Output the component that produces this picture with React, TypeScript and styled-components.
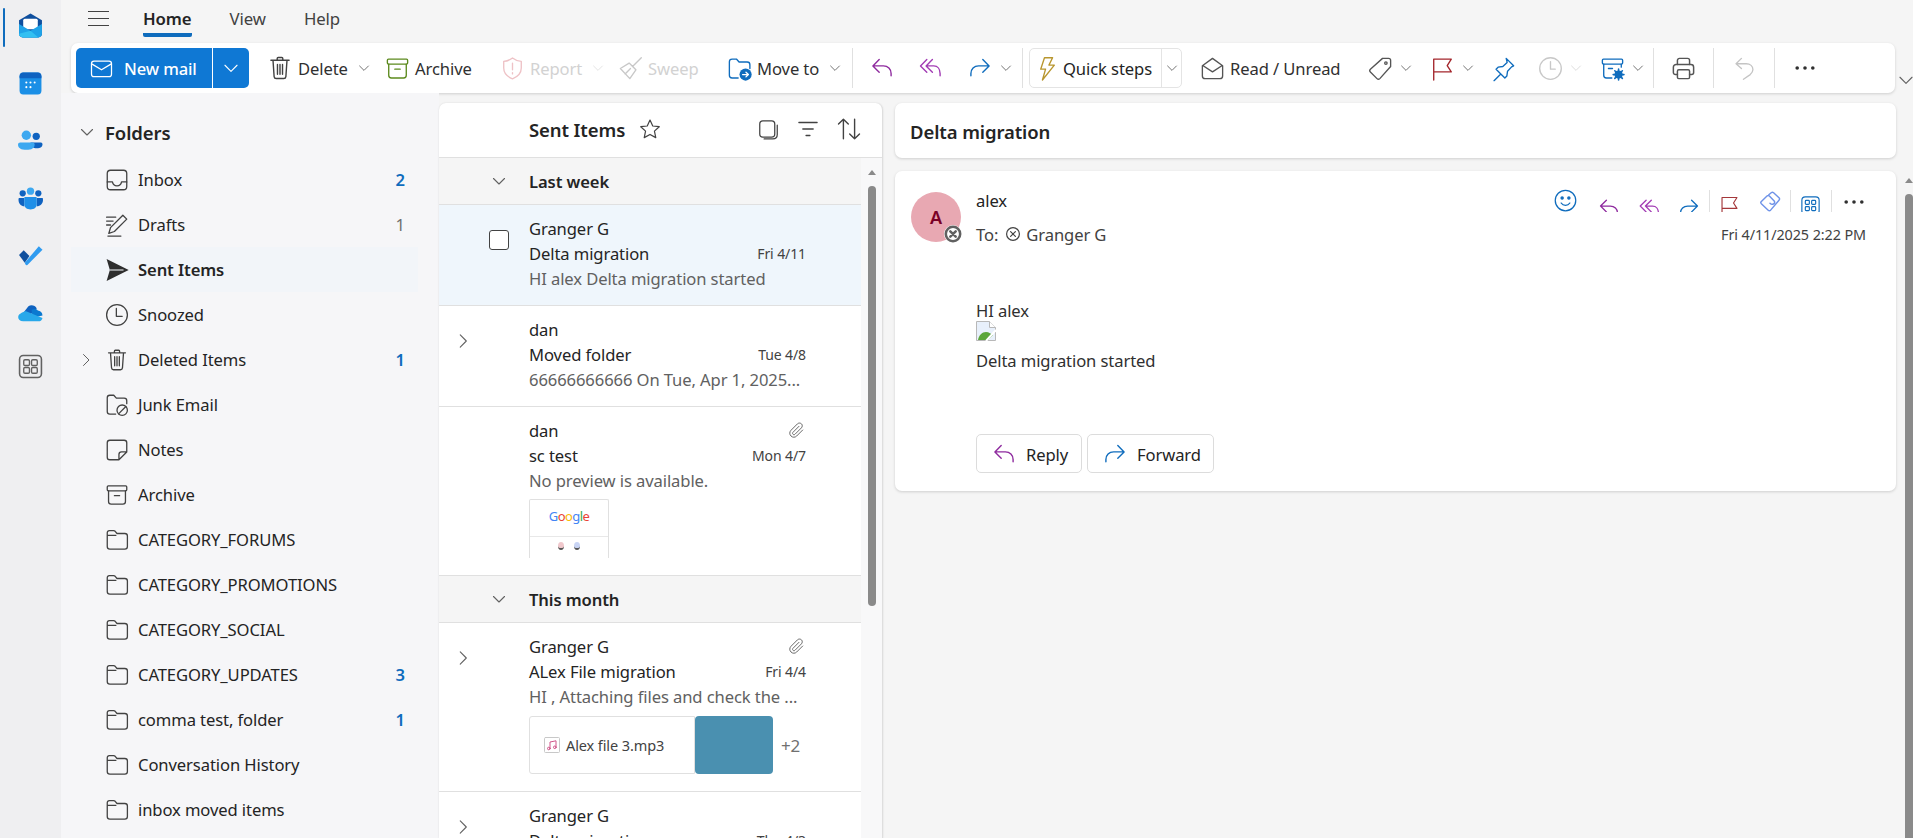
import React, { FC, ReactNode } from 'react';
import styled, { createGlobalStyle } from 'styled-components';

const Global = createGlobalStyle`
  html, body { margin: 0; padding: 0; height: 100%; overflow: hidden; }
  body {
    background: #f5f5f5;
    color: #242424;
    font-family: "Noto Sans", "Open Sans", sans-serif;
    font-size: 16.6px;
    letter-spacing: -0.1px;
  }
  * { box-sizing: border-box; }
`;

const paths: Record<string, ReactNode> = {
  mail: <><rect x="2" y="4" width="16" height="12.5" rx="2" /><path d="M2.5 6.5 10 11l7.5-4.5" /></>,
  trash: <path d="M3.5 4.5h13M8 4.5V3.2c0-.4.3-.7.7-.7h2.6c.4 0 .7.3.7.7v1.3M5 4.5l.8 11.6c.1.8.7 1.4 1.5 1.4h5.4c.8 0 1.4-.6 1.5-1.4L15 4.5M8.2 7.5v7M10 7.5v7M11.8 7.5v7" />,
  archive: <><rect x="2.5" y="3" width="15" height="3.8" rx=".8" /><path d="M3.5 6.8V15c0 1.1.9 2 2 2h9c1.1 0 2-.9 2-2V6.800M8 10.500h4" /></>,
  shield: <><path d="M10 2.200c2 1.600 4.200 2.400 6.500 2.500v5c0 3.600-2.300 6.300-6.500 8-4.200-1.700-6.500-4.400-6.500-8v-5c2.300-.1 4.500-.9 6.500-2.500z" /><path d="M10 6v5M10 13v1" /></>,
  broom: <path d="M18 2 11.500 8.500M9 6l5 5-4.500 6.500-7-7.500zM6 14l4-4" />,
  moveFolder: <><path d="M2.500 15V5c0-1.100.9-2 2-2h3.200l2 2.200h6c1.100 0 2 .9 2 2V10M2.500 15c0 1.100.9 2 2 2h4.500" /><circle cx="14.500" cy="14.500" r="4.500" fill="#0f6cbd" stroke="none" /><path d="M12.300 14.500h4.200M14.800 12.800l1.800 1.700-1.800 1.700" stroke="#fff" /></>,
  reply: <path d="M8 4 3.500 8.500 8 13M3.500 8.500H11c3.200 0 5.500 2.300 5.500 5.500v1.500" />,
  replyAll: <path d="M7 4 2.500 8.500 7 13M11 4 6.500 8.500 11 13M6.500 8.500H12c2.800 0 4.500 2.300 4.500 5.500v1.500" />,
  forward: <path d="M12 4l4.500 4.500L12 13M16.500 8.500H9c-3.200 0-5.500 2.300-5.500 5.500v1.500" />,
  bolt: <path d="M8.500 2h6l-2.700 5.500h4L7 18.500l2.300-8H5.700z" />,
  readMail: <path d="M2.500 8v7.500c0 1.100.9 2 2 2h11c1.100 0 2-.9 2-2V8L10 2.500zM2.800 7.800 10 12.500l7.200-4.700" />,
  tag: <><path d="M11.500 2.500h4.500c.8 0 1.500.7 1.500 1.500v4.500L9.500 17.500c-.6.600-1.500.600-2.100 0l-4.900-4.900c-.6-.6-.6-1.500 0-2.100z" /><circle cx="14" cy="6" r=".9" /></>,
  flag: <path d="M3.500 18.500V3h13l-3 4.800 3 4.700h-13" />,
  pin: <path d="M12 2.500l5.500 5.500-1.500.8-3 3.200-.5 3.500-1.500 1.500-3-3-5 5 5-5-3.500-3.500 1.500-1.500 3.500-.5 3.200-3z" />,
  clock: <><circle cx="10" cy="10" r="8" /><path d="M10 5v5.500h3.500" /></>,
  rules: <><rect x="2.500" y="3" width="15" height="3.800" rx=".8" /><path d="M3.500 6.800V15c0 1.100.9 2 2 2h4M16.500 6.800V9M7 10h3" /><circle cx="14.500" cy="14.500" r="3" fill="#0f6cbd" stroke="none" /><circle cx="14.500" cy="14.500" r="1" fill="#fff" stroke="none" /><path d="M14.500 10.500v8M10.500 14.500h8M11.700 11.700l5.600 5.600M17.300 11.700l-5.600 5.600" strokeWidth="1.200" /></>,
  print: <><path d="M5.500 7V4c0-.8.7-1.500 1.500-1.500h6c.8 0 1.500.7 1.500 1.500v3" /><path d="M5.500 14.500H4c-.8 0-1.500-.7-1.500-1.500V9c0-1.100.9-2 2-2h11c1.100 0 2 .9 2 2v4c0 .8-.7 1.500-1.500 1.500h-1.500" /><rect x="5.500" y="11" width="9" height="6.500" rx="1" /></>,
  undo: <path d="M7 2.500 3 6.500l4 3.500M3 6.500h7.500c3 0 5 1.800 5 4.300 0 1.500-.8 2.700-2 3.700L8.500 18" />,
  chevDown: <path d="M4.500 7.500 10 13l5.500-5.500" />,
  chevRight: <path d="M7.500 4.500 13 10l-5.500 5.500" />,
  inbox: <><rect x="2.500" y="2.500" width="15" height="15" rx="2.500" /><path d="M2.500 11.500h4c.3 1.700 1.700 3 3.500 3s3.200-1.300 3.500-3h4" /></>,
  drafts: <path d="M2 4h7M2 7h5M2 10h3M14.500 2.500l3 3-9.500 9.500-4.300 1.500 1.300-4.500zM3 18.500h10" />,
  snooze: <><circle cx="10" cy="10" r="8" /><path d="M9.500 5v6H14" /></>,
  junk: <><path d="M9 17H4.500c-1.100 0-2-.9-2-2V4.500c0-1.100.9-2 2-2h3l2 2.200h6c1.100 0 2 .9 2 2V9" /><circle cx="14" cy="14" r="4" /><path d="M11.200 16.800l5.600-5.600" /></>,
  note: <path d="M4.500 2.500h11c1.100 0 2 .9 2 2v7l-6 6h-7c-1.100 0-2-.9-2-2v-11c0-1.100.9-2 2-2zM17.500 11.500h-4c-1.100 0-2 .9-2 2v4" />,
  folder: <path d="M2.500 15V4.500c0-1.100.6-1.700 1.600-1.700h3.300c.5 0 .9.200 1.200.500l1.400 1.700h6c1.100 0 2 .9 2 2V15c0 1.100-.9 2-2 2h-11.500c-1.100 0-2-.9-2-2zM2.500 6.500h6.600" />,
  star: <path d="M10 2.500l2.300 5 5.400.6-4 3.700 1.100 5.400L10 14.500l-4.800 2.700 1.100-5.400-4-3.700 5.400-.6z" />,
  stack: <><rect x="3" y="3" width="12" height="13" rx="2.500" /><path d="M17 6.500V14c0 2-1.300 3.500-3.500 3.500H6.500" /></>,
  filter: <path d="M3 5h14M6 10h8M8.500 15h3" />,
  sort: <path d="M6 17V3M2.500 6.500 6 3l3.500 3.500M14 3v14M10.500 13.500 14 17l3.500-3.500" />,
  clip: <path d="M16.500 9.500l-6.300 6.300c-1.700 1.700-4.300 1.700-6 0s-1.700-4.300 0-6l6.800-6.800c1.100-1.100 3-1.100 4.200 0s1.100 3 0 4.200l-6.800 6.800c-.6.600-1.500.600-2.100 0s-.6-1.500 0-2.100l6.300-6.300" />,
  smile: <><circle cx="10" cy="10" r="8.200" /><path d="M6.500 12c.8 1.200 2 1.900 3.500 1.900s2.700-.7 3.500-1.900" /><circle cx="7.300" cy="8" r=".9" fill="currentColor" /><circle cx="12.700" cy="8" r=".9" fill="currentColor" /></>,
  loop: <path d="M9 4 11 2.300Q12 1.500 13 2.300L17.500 6.500Q18.500 7.500 17.500 8.500L10.500 16.800Q9.500 17.800 8.500 16.800L2.800 11.500Q1.800 10.500 2.800 9.500L7.500 5Q8.500 4 9.500 5L13.500 9.200Q14.500 10.500 13 11.500 11.500 12.500 10 11" />,
  apps: <><rect x="2.500" y="2.500" width="15" height="15" rx="3" /><rect x="5.500" y="5.500" width="3.500" height="3.500" rx=".8" /><rect x="11" y="5.500" width="3.500" height="3.500" rx=".8" /><rect x="5.500" y="11" width="3.500" height="3.500" rx=".8" /><rect x="11" y="11" width="3.500" height="3.500" rx=".8" /></>,
  dismissCircle: <><circle cx="10" cy="10" r="8" /><path d="M7 7l6 6M13 7l-6 6" /></>,
  music: <><rect x="2.500" y="2.500" width="15" height="15" rx="1" stroke="#c8c8c8" /><path d="M8 13.500V7l6-1.200v6.500" /><circle cx="6.800" cy="13.500" r="1.300" /><circle cx="12.800" cy="12.300" r="1.300" /></>,
  more: <g fill="currentColor" stroke="none"><circle cx="3.500" cy="10" r="1.500" /><circle cx="10" cy="10" r="1.500" /><circle cx="16.500" cy="10" r="1.500" /></g>,
};

const Svg = styled.svg<{ $color?: string }>`
  display: block;
  flex: none;
  fill: none;
  stroke: currentColor;
  stroke-linecap: round;
  stroke-linejoin: round;
  color: ${p => p.$color || '#424242'};
`;

const Icon: FC<{ name: string; size?: number; color?: string; width?: number }> = ({ name, size = 27, color, width = 1 }) => (
  <Svg $color={color} width={size} height={size} viewBox="0 0 20 20" strokeWidth={width}>
    {paths[name]}
  </Svg>
);

/* app rail */

const Page = styled.div`
  display: flex;
  width: 100%;
  height: 100vh;
  overflow: hidden;
`;

const Rail = styled.nav`
  flex: 0 0 61px;
  display: flex;
  flex-direction: column;
  align-items: center;
  padding-top: 13px;
  background: #efeff1;
  position: relative;
`;

const RailSlot = styled.div<{ $h: number }>`
  height: ${p => p.$h}px;
  width: 100%;
  display: flex;
  justify-content: center;
`;

const RailMark = styled.div`
  position: absolute;
  left: 3px;
  top: 8px;
  width: 2px;
  height: 39px;
  background: #0f6cbd;
  border-radius: 1px;
`;

const RailGlyph = styled.svg`
  display: block;
  width: 25px;
  height: 25px;
`;

const railIcons: { h: number; glyph: ReactNode }[] = [
  { h: 58, glyph: <><path d="M12 .5 1 7v13c0 2 1.500 3.500 3.500 3.500h15c2 0 3.500-1.500 3.500-3.500V7z" fill="#0f4f9e" /><rect x="5" y="5.500" width="14" height="10" rx="1.500" fill="#fff" /><path d="M1 10.500 12 17l11-6.500V20c0 2-1.500 3.500-3.500 3.500h-15C2.500 23.500 1 22 1 20z" fill="#1fa3e8" /><path d="M1 20c0 2 1.500 3.500 3.500 3.500h15L12 17z" fill="#32c0f2" /></> },
  { h: 58, glyph: <><rect x="1.500" y="1.500" width="21" height="21" rx="3.500" fill="#1b8fe6" /><path d="M1.500 7V5c0-2 1.500-3.500 3.500-3.500h14c2 0 3.500 1.500 3.500 3.500v2z" fill="#0f62c0" /><g fill="#fff"><circle cx="8" cy="11" r="1" /><circle cx="12" cy="11" r="1" /><circle cx="16" cy="11" r="1" /><circle cx="8" cy="15.500" r="1" /><circle cx="12" cy="15.500" r="1" /></g></> },
  { h: 57, glyph: <><circle cx="17.500" cy="7" r="3.500" fill="#0f62c0" /><path d="M12 13h10c1 0 1.500.8 1.500 1.800 0 2-2 3.700-5.500 3.700s-6-1.700-6-5.500z" fill="#0f62c0" /><circle cx="8" cy="6" r="4.500" fill="#3da8f0" /><path d="M2 13h12c1.200 0 2 .8 2 2 0 3-3 5-8 5s-8-2-8-5c0-1.200 1-2 2-2z" fill="#3da8f0" /></> },
  { h: 56, glyph: <><circle cx="4.500" cy="7" r="3" fill="#0f62c0" /><circle cx="19.500" cy="7" r="3" fill="#0f62c0" /><circle cx="12" cy="5" r="3.500" fill="#3da8f0" /><path d="M1 11.500h5v8c-3 0-5.500-2.500-5.500-6 0-1 0-2 .5-2zM18 11.500h5.500c.5 0 .5 1 .5 2 0 3.500-2.500 6-6 6z" fill="#0f62c0" /><path d="M7 10.500h10c.6 0 1 .4 1 1v6c0 3-2.500 5-6 5s-6-2-6-5v-6c0-.6.4-1 1-1z" fill="#1f8fe8" /></> },
  { h: 59, glyph: <><path d="M1 12.500 5.500 8l5.500 5.500L6.500 20z" fill="#0f4f9e" /><path d="M6.500 20 20 4l3.500 3.500L9 22c-.8.700-1.500.700-2.500-2z" fill="#2f9bf0" /></> },
  { h: 53, glyph: <><path d="M10 5c2.800-1.800 6.500-.8 8 2.200L9 16H1.500z" fill="#0f62c0" /><path d="M13 8.500c2.500-1.300 5.300-1.200 6 .7 2.500.2 4.500 2.200 4.500 4.800L14 16z" fill="#0b79d0" /><path d="M5 10.500c1.500-.8 3-.8 4.500 0l14 5.700c-.3 1.800-1.800 3.300-4 3.300H5c-4 0-5.500-3-4.500-5.500C1 12.500 3 11.500 5 10.500z" fill="#28a8ea" /></> },
  { h: 30, glyph: <><rect x="1.500" y="1.500" width="21" height="21" rx="3.500" fill="none" stroke="#616161" strokeWidth="1.500" /><g fill="none" stroke="#616161" strokeWidth="1.300"><rect x="5.500" y="5.500" width="5.500" height="5.500" rx="1.200" /><rect x="13" y="5.500" width="5.500" height="5.500" rx="1.200" /><rect x="5.500" y="13" width="5.500" height="5.500" rx="1.200" /><rect x="13" y="13" width="5.500" height="5.500" rx="1.200" /></g></> },
];

/* tabs and ribbon */

const Main = styled.div`
  flex: 1;
  min-width: 0;
  display: flex;
  flex-direction: column;
`;

const TabBar = styled.div`
  flex: 0 0 43px;
  display: flex;
  align-items: flex-start;
  padding-left: 27px;
`;

const Burger = styled.div`
  width: 21px;
  height: 15px;
  margin: 11px 34px 0 0;
  border-top: 1.500px solid #424242;
  border-bottom: 1.500px solid #424242;
  position: relative;

  &:after {
    content: "";
    position: absolute;
    left: 0;
    right: 0;
    top: 5.500px;
    height: 1.500px;
    background: #424242;
  }
`;

const Tab = styled.div<{ $active?: boolean }>`
  height: 37px;
  margin-right: 38px;
  padding-top: 7px;
  line-height: 24px;
  font-size: 16.800px;
  font-weight: ${p => (p.$active ? 600 : 400)};
  color: ${p => (p.$active ? '#242424' : '#424242')};
  border-bottom: ${p => (p.$active ? '4px solid #0f6cbd' : '0')};
  border-radius: 0 0 2px 2px;
`;

const RibbonRow = styled.div`
  flex: 0 0 50px;
  display: flex;
  padding-left: 10px;
`;

const Ribbon = styled.div`
  flex: 0 0 1824px;
  display: flex;
  align-items: center;
  padding-left: 5px;
  background: #fff;
  border-radius: 7px;
  box-shadow: 0 1px 3px rgba(0, 0, 0, 0.16);
`;

const Collapse = styled.div`
  align-self: flex-end;
  margin-bottom: 2px;
`;

const NewMail = styled.div`
  flex: 0 0 173px;
  height: 40px;
  margin-right: 20px;
  display: flex;
  background: #0f78d4;
  color: #fff;
  border-radius: 5px;
  font-weight: 500;
  font-size: 16.500px;
`;

const NewMailMain = styled.div`
  flex: 0 0 137px;
  display: flex;
  align-items: center;
  gap: 10px;
  padding-left: 13px;
  border-right: 1px solid #fff;
`;

const NewMailDrop = styled.div`
  flex: 1;
  display: flex;
  align-items: center;
  justify-content: center;
`;

const Tool = styled.div<{ $w: number; $off?: boolean }>`
  flex: 0 0 ${p => p.$w}px;
  display: flex;
  align-items: center;
  gap: 4px;
  color: ${p => (p.$off ? '#d2d2d2' : '#303030')};
  white-space: nowrap;

  > svg:first-child {
    margin-left: -3px;
  }
`;

const ToolDrop = styled.span`
  margin-left: 4px;
`;

const Sep = styled.div<{ $mr?: number }>`
  flex: none;
  width: 1px;
  height: 40px;
  background: #e0e0e0;
  margin-right: ${p => p.$mr || 0}px;
`;

const QuickSteps = styled.div`
  flex: 0 0 153px;
  height: 40px;
  margin-right: 20px;
  display: flex;
  border: 1px solid #e4e4e4;
  border-radius: 5px;
  color: #242424;
`;

const QuickMain = styled.div`
  flex: 0 0 132px;
  display: flex;
  align-items: center;
  gap: 3px;
  padding-left: 3px;
  border-right: 1px solid #e4e4e4;
  white-space: nowrap;
`;

const QuickDrop = styled.div`
  flex: 1;
  display: flex;
  align-items: center;
  justify-content: center;
`;

/* folders */

const Content = styled.div`
  flex: 1;
  min-height: 0;
  display: flex;
  margin-top: 10px;
`;

const FolderPane = styled.aside`
  flex: 0 0 378px;
  padding: 10px 21px 0 10px;
  background: #f6f6f8;
  margin-top: -10px;
`;

const FolderHead = styled.div`
  height: 54px;
  padding: 4px 0 0 6px;
  display: flex;
  align-items: center;
  gap: 8px;
  font-size: 18.500px;
  font-weight: 600;
`;

const FolderRow = styled.div<{ $on?: boolean }>`
  height: 45px;
  display: grid;
  grid-template-columns: 36px 31px 1fr auto;
  align-items: center;
  padding-right: 13px;
  background: ${p => (p.$on ? '#f2f5f9' : 'transparent')};
  font-weight: ${p => (p.$on ? 600 : 400)};
  white-space: nowrap;
`;

const Twisty = styled.div`
  padding-left: 5px;
`;

const FolderGlyph = styled.div`
  margin-left: -3px;
`;

const Count = styled.span<{ $muted?: boolean }>`
  color: ${p => (p.$muted ? '#707070' : '#0f6cbd')};
  font-weight: ${p => (p.$muted ? 400 : 600)};
`;

/* message list */

const ListPane = styled.section`
  flex: 0 0 444px;
  display: flex;
  flex-direction: column;
  background: #fff;
  border-radius: 7px 7px 0 0;
  border-right: 1px solid #dedede;
  box-shadow: 0 0 2px rgba(0, 0, 0, 0.12);
`;

const ListHead = styled.header`
  flex: 0 0 55px;
  display: flex;
  align-items: center;
  padding: 0 19px 2px 90px;
  border-bottom: 1px solid #e0e0e0;
`;

const ListTitle = styled.div`
  font-size: 18.500px;
  font-weight: 600;
  margin-right: 13px;
`;

const ListTools = styled.div`
  margin-left: auto;
  display: flex;
  align-items: center;
  gap: 14px;
`;

const ListWrap = styled.div`
  flex: 1;
  min-height: 0;
  display: flex;
`;

const ListBody = styled.div`
  flex: 0 0 422px;
  overflow: hidden;
`;

const Group = styled.div`
  height: 47px;
  display: grid;
  grid-template-columns: 90px 1fr;
  align-items: center;
  background: #f5f5f5;
  border-bottom: 1px solid #e0e0e0;
  font-weight: 600;
`;

const GroupChev = styled.div`
  padding-left: 50px;
`;

const Mail = styled.article<{ $on?: boolean }>`
  display: grid;
  grid-template-columns: 90px 1fr;
  padding: 11px 55px 0 0;
  background: ${p => (p.$on ? '#eff6fc' : '#fff')};
  border-bottom: 1px solid #e0e0e0;
`;

const MailLead = styled.div<{ $check?: boolean }>`
  padding: ${p => (p.$check ? '14px 0 0 50px' : '13px 0 0 13px')};
`;

const Checkbox = styled.div`
  width: 20px;
  height: 20px;
  border: 1px solid #424242;
  border-radius: 3px;
  background: #fff;
`;

const MailLine = styled.div`
  height: 25px;
  line-height: 25px;
  display: flex;
  align-items: center;
  justify-content: space-between;
  white-space: nowrap;
`;

const Preview = styled(MailLine)`
  color: #616161;
`;

const MailDate = styled.span`
  font-size: 14px;
  color: #424242;
`;

const MailSpace = styled.div<{ $h: number }>`
  height: ${p => p.$h}px;
`;

const Thumb = styled.div`
  width: 80px;
  height: 59px;
  margin-top: 6px;
  border: 1px solid #e0e0e0;
  border-bottom: 0;
  border-radius: 2px 2px 0 0;
  display: flex;
  flex-direction: column;
  align-items: center;
`;

const ThumbLogo = styled.div`
  height: 37px;
  width: 100%;
  padding-top: 8px;
  text-align: center;
  font-size: 13px;
  line-height: 17px;
  letter-spacing: -0.600px;
  border-bottom: 1px solid #e8e8e8;
`;

const GL = styled.span<{ $c: string }>`
  color: ${p => p.$c};
`;

const ThumbBits = styled.div`
  display: flex;
  gap: 10px;
  padding-top: 5px;
`;

const ThumbDot = styled.div<{ $c: string }>`
  width: 6px;
  height: 8px;
  border-radius: 50%;
  background: ${p => p.$c};
  border-bottom: 2px solid #555;
`;

const Attachments = styled.div`
  display: flex;
  align-items: center;
  height: 58px;
  margin: 7px 0 17px;
`;

const AttachCard = styled.div`
  flex: 0 0 166px;
  height: 100%;
  display: flex;
  align-items: center;
  gap: 4px;
  padding-left: 12px;
  border: 1px solid #e0e0e0;
  border-radius: 3px 0 0 3px;
  font-size: 14.500px;
  color: #424242;
  white-space: nowrap;
`;

const AttachTile = styled.div`
  flex: 0 0 78px;
  height: 100%;
  background: #4a90b0;
  border-radius: 4px;
`;

const AttachMore = styled.span`
  margin-left: 8px;
  font-size: 17px;
  color: #707070;
`;

const Track = styled.div<{ $bg?: string }>`
  flex: 1;
  display: flex;
  flex-direction: column;
  align-items: center;
  padding-top: 12px;
  background: ${p => p.$bg || '#f8f8f9'};
`;

const ArrowUp = styled.div`
  width: 0;
  height: 0;
  border: 4px solid transparent;
  border-top: 0;
  border-bottom: 5px solid #8a8a8a;
`;

const Thumbbar = styled.div<{ $h: number }>`
  width: 8px;
  height: ${p => p.$h}px;
  margin-top: 11px;
  border-radius: 4px;
  background: #8a8a8a;
`;

/* reading pane */

const Reading = styled.main`
  flex: 1;
  min-width: 0;
  display: flex;
  padding-left: 12px;
`;

const ReadingCol = styled.div`
  flex: 0 0 1001px;
  display: flex;
  flex-direction: column;
  gap: 13px;
`;

const Subject = styled.h1`
  margin: 0;
  height: 55px;
  display: flex;
  align-items: center;
  padding: 2px 0 0 15px;
  background: #fff;
  border-radius: 7px;
  box-shadow: 0 1px 3px rgba(0, 0, 0, 0.16);
  font-size: 18.500px;
  font-weight: 600;
`;

const Card = styled.div`
  height: 320px;
  display: grid;
  grid-template-columns: 65px 1fr;
  padding: 19px 30px 17px 16px;
  background: #fff;
  border-radius: 7px;
  box-shadow: 0 1px 3px rgba(0, 0, 0, 0.16);
`;

const Avatar = styled.div`
  width: 50px;
  height: 50px;
  margin-top: 2px;
  position: relative;
  display: flex;
  align-items: center;
  justify-content: center;
  border-radius: 50%;
  background: #e8a8b2;
  color: #7a0026;
  font-size: 18px;
  font-weight: 600;
`;

const Presence = styled.div`
  position: absolute;
  right: -1px;
  bottom: -1px;
  background: #fff;
  border-radius: 50%;
`;

const CardHead = styled.div`
  display: flex;
  justify-content: space-between;
`;

const Sender = styled.div`
  height: 22px;
  line-height: 22px;
  margin-bottom: 10px;
`;

const ToLine = styled.div`
  display: flex;
  align-items: center;
  gap: 5px;
  height: 24px;
  color: #424242;
`;

const Recipient = styled.span`
  margin-left: 2px;
`;

const CardSide = styled.div`
  display: flex;
  flex-direction: column;
  align-items: flex-end;
  margin-top: -2px;
`;

const Actions = styled.div`
  display: flex;
  height: 24px;
`;

const ActionSlot = styled.div<{ $w: number; $top?: number }>`
  flex: 0 0 ${p => p.$w}px;
  height: 24px;
  overflow: visible clip;
  padding-top: ${p => p.$top ?? 0}px;
`;

const ActionSep = styled.div<{ $mr: number }>`
  flex: none;
  align-self: flex-end;
  width: 1px;
  height: 22px;
  margin-right: ${p => p.$mr}px;
  background: #e0e0e0;
`;

const Stamp = styled.div`
  margin-top: 12px;
  font-size: 14.400px;
  line-height: 22px;
  color: #424242;
  white-space: nowrap;
`;

const Body = styled.div`
  margin-top: 52px;
  line-height: 25px;
  color: #303030;
`;

const Broken = styled.svg`
  display: block;
  width: 20px;
  height: 20px;
  margin: -2px 0 7px;
`;

const Buttons = styled.div`
  display: flex;
  gap: 5px;
  margin-top: 61px;
`;

const ReplyButton = styled.div<{ $w: number }>`
  flex: 0 0 ${p => p.$w}px;
  height: 39px;
  display: flex;
  align-items: center;
  gap: 8px;
  padding: 1px 0 0 13px;
  border: 1px solid #dcdcdc;
  border-radius: 5px;
  color: #242424;
`;

const Side = styled.div`
  flex: 1;
  display: flex;
  flex-direction: column;
  margin: 63px 0 0 9px;
`;

const Chev: FC<{ color?: string; size?: number }> = ({ color = '#616161', size = 16 }) => (
  <Icon name="chevDown" size={size} color={color} width={1.100} />
);

const RowChev: FC = () => <Icon name="chevRight" size={22} color="#616161" />;

const folders = [
  { icon: 'inbox', name: 'Inbox', count: '2' },
  { icon: 'drafts', name: 'Drafts', count: '1', muted: true },
  { icon: 'send', name: 'Sent Items', on: true },
  { icon: 'snooze', name: 'Snoozed' },
  { icon: 'trash', name: 'Deleted Items', count: '1', twisty: true },
  { icon: 'junk', name: 'Junk Email' },
  { icon: 'note', name: 'Notes' },
  { icon: 'archive', name: 'Archive' },
  { icon: 'folder', name: 'CATEGORY_FORUMS' },
  { icon: 'folder', name: 'CATEGORY_PROMOTIONS' },
  { icon: 'folder', name: 'CATEGORY_SOCIAL' },
  { icon: 'folder', name: 'CATEGORY_UPDATES', count: '3' },
  { icon: 'folder', name: 'comma test, folder', count: '1' },
  { icon: 'folder', name: 'Conversation History' },
  { icon: 'folder', name: 'inbox moved items' },
];

const SendGlyph: FC = () => (
  <svg width={26} height={26} viewBox="0 0 20 20" style={{ display: 'block' }}>
    <path d="M2 1.500 19 10 2 18.500 4.500 10z" fill="#2e2e2e" />
    <path d="M4.500 10H15" stroke="#f2f5f9" strokeWidth=".8" />
  </svg>
);

const App: FC = () => (
  <>
    <Global />
    <Page>
      <Rail>
        <RailMark />
        {railIcons.map((item, i) => (
          <RailSlot key={i} $h={item.h}>
            <RailGlyph viewBox="0 0 24 24">{item.glyph}</RailGlyph>
          </RailSlot>
        ))}
      </Rail>
      <Main>
        <TabBar>
          <Burger />
          <Tab $active>Home</Tab>
          <Tab>View</Tab>
          <Tab>Help</Tab>
        </TabBar>
        <RibbonRow>
          <Ribbon>
            <NewMail>
              <NewMailMain>
                <Icon name="mail" color="#fff" size={25} />
                New mail
              </NewMailMain>
              <NewMailDrop>
                <Icon name="chevDown" color="#fff" size={22} />
              </NewMailDrop>
            </NewMail>
            <Tool $w={118}>
              <Icon name="trash" size={28} />
              Delete
              <ToolDrop><Chev /></ToolDrop>
            </Tool>
            <Tool $w={115}>
              <Icon name="archive" color="#5c8a1e" />
              Archive
            </Tool>
            <Tool $w={118} $off>
              <Icon name="shield" color="#eec2c6" />
              Report
              <ToolDrop><Chev color="#e0e0e0" /></ToolDrop>
            </Tool>
            <Tool $w={109} $off>
              <Icon name="broom" color="#c8c8c8" />
              Sweep
            </Tool>
            <Tool $w={123}>
              <Icon name="moveFolder" color="#0f6cbd" />
              Move to
              <ToolDrop><Chev /></ToolDrop>
            </Tool>
            <Sep $mr={18} />
            <Tool $w={49}><Icon name="reply" size={28} color="#8e2a9e" /></Tool>
            <Tool $w={49}><Icon name="replyAll" size={28} color="#a23cb4" /></Tool>
            <Tool $w={53}>
              <Icon name="forward" size={28} color="#0f6cbd" />
              <Chev />
            </Tool>
            <Sep $mr={6} />
            <QuickSteps>
              <QuickMain>
                <Icon name="bolt" color="#b8962e" />
                Quick steps
              </QuickMain>
              <QuickDrop><Chev /></QuickDrop>
            </QuickSteps>
            <Tool $w={168}>
              <Icon name="readMail" color="#555" />
              Read / Unread
            </Tool>
            <Tool $w={62}>
              <Icon name="tag" color="#555" />
              <Chev />
            </Tool>
            <Tool $w={61}>
              <Icon name="flag" color="#a4262c" />
              <Chev />
            </Tool>
            <Tool $w={47}><Icon name="pin" color="#0f6cbd" /></Tool>
            <Tool $w={62}>
              <Icon name="clock" color="#c8c8c8" />
              <Chev color="#d8d8d8" />
            </Tool>
            <Tool $w={51}>
              <Icon name="rules" color="#0f6cbd" />
              <Chev />
            </Tool>
            <Sep $mr={19} />
            <Tool $w={40}><Icon name="print" color="#555" width={1.100} /></Tool>
            <Sep $mr={21} />
            <Tool $w={39}><Icon name="undo" color="#c4c4c4" /></Tool>
            <Sep $mr={18} />
            <Icon name="more" size={24} color="#303030" />
          </Ribbon>
          <Collapse><Icon name="chevDown" size={22} color="#616161" /></Collapse>
        </RibbonRow>
        <Content>
          <FolderPane>
            <FolderHead>
              <Chev size={20} />
              Folders
            </FolderHead>
            {folders.map(f => (
              <FolderRow key={f.name} $on={f.on}>
                <Twisty>{f.twisty && <Icon name="chevRight" size={20} color="#616161" />}</Twisty>
                <FolderGlyph>{f.icon === 'send' ? <SendGlyph /> : <Icon name={f.icon} size={26} />}</FolderGlyph>
                {f.name}
                {f.count ? <Count $muted={f.muted}>{f.count}</Count> : <span />}
              </FolderRow>
            ))}
          </FolderPane>

          <ListPane>
            <ListHead>
              <ListTitle>Sent Items</ListTitle>
              <Icon name="star" size={24} color="#424242" />
              <ListTools>
                <Icon name="stack" size={25} />
                <Icon name="filter" size={26} />
                <Icon name="sort" size={28} />
              </ListTools>
            </ListHead>
            <ListWrap>
              <ListBody>
                <Group>
                  <GroupChev><Chev size={20} /></GroupChev>
                  Last week
                </Group>
                <Mail $on>
                  <MailLead $check><Checkbox /></MailLead>
                  <div>
                    <MailLine>Granger G</MailLine>
                    <MailLine>Delta migration <MailDate>Fri 4/11</MailDate></MailLine>
                    <Preview>HI alex Delta migration started</Preview>
                    <MailSpace $h={14} />
                  </div>
                </Mail>
                <Mail>
                  <MailLead><RowChev /></MailLead>
                  <div>
                    <MailLine>dan</MailLine>
                    <MailLine>Moved folder <MailDate>Tue 4/8</MailDate></MailLine>
                    <Preview>66666666666 On Tue, Apr 1, 2025...</Preview>
                    <MailSpace $h={14} />
                  </div>
                </Mail>
                <Mail>
                  <MailLead />
                  <div>
                    <MailLine>dan <Icon name="clip" size={19} color="#616161" /></MailLine>
                    <MailLine>sc test <MailDate>Mon 4/7</MailDate></MailLine>
                    <Preview>No preview is available.</Preview>
                    <Thumb>
                      <ThumbLogo>
                        <GL $c="#4285f4">G</GL><GL $c="#ea4335">o</GL><GL $c="#fbbc05">o</GL>
                        <GL $c="#4285f4">g</GL><GL $c="#34a853">l</GL><GL $c="#ea4335">e</GL>
                      </ThumbLogo>
                      <ThumbBits>
                        <ThumbDot $c="#f0c8cc" />
                        <ThumbDot $c="#c8d4f4" />
                      </ThumbBits>
                    </Thumb>
                    <MailSpace $h={17} />
                  </div>
                </Mail>
                <Group>
                  <GroupChev><Chev size={20} /></GroupChev>
                  This month
                </Group>
                <Mail>
                  <MailLead><RowChev /></MailLead>
                  <div>
                    <MailLine>Granger G <Icon name="clip" size={19} color="#616161" /></MailLine>
                    <MailLine>ALex File migration <MailDate>Fri 4/4</MailDate></MailLine>
                    <Preview>HI , Attaching files and check the ...</Preview>
                    <Attachments>
                      <AttachCard>
                        <Icon name="music" size={20} color="#d0568a" />
                        Alex file 3.mp3
                      </AttachCard>
                      <AttachTile />
                      <AttachMore>+2</AttachMore>
                    </Attachments>
                  </div>
                </Mail>
                <Mail>
                  <MailLead><RowChev /></MailLead>
                  <div>
                    <MailLine>Granger G</MailLine>
                    <MailLine>Delta migration <MailDate>Thu 4/3</MailDate></MailLine>
                  </div>
                </Mail>
              </ListBody>
              <Track>
                <ArrowUp />
                <Thumbbar $h={420} />
              </Track>
            </ListWrap>
          </ListPane>

          <Reading>
            <ReadingCol>
              <Subject>Delta migration</Subject>
              <Card>
                <Avatar>
                  A
                  <Presence><Icon name="dismissCircle" size={18} color="#616161" width={2.800} /></Presence>
                </Avatar>
                <div>
                  <CardHead>
                    <div>
                      <Sender>alex</Sender>
                      <ToLine>
                        To:
                        <Recipient><Icon name="dismissCircle" size={16} color="#424242" width={1.500} /></Recipient>
                        Granger G
                      </ToLine>
                    </div>
                    <CardSide>
                      <Actions>
                        <ActionSlot $w={42.500}><Icon name="smile" size={25} color="#0f6cbd" /></ActionSlot>
                        <ActionSlot $w={41} $top={7}><Icon name="reply" size={26} color="#8e2a9e" /></ActionSlot>
                        <ActionSlot $w={39} $top={7}><Icon name="replyAll" size={26} color="#a23cb4" /></ActionSlot>
                        <ActionSlot $w={33.500} $top={7}><Icon name="forward" size={26} color="#0f6cbd" /></ActionSlot>
                        <ActionSep $mr={8} />
                        <ActionSlot $w={39.500} $top={5.500}><Icon name="flag" size={23} color="#a4373a" /></ActionSlot>
                        <ActionSlot $w={32.500} $top={2}><Icon name="loop" size={24} color="#6f93e8" width={1.200} /></ActionSlot>
                        <ActionSep $mr={8} />
                        <ActionSlot $w={32} $top={6}><Icon name="apps" size={23} color="#0f6cbd" /></ActionSlot>
                        <ActionSep $mr={10} />
                        <ActionSlot $w={24} $top={2}><Icon name="more" size={24} color="#303030" /></ActionSlot>
                      </Actions>
                      <Stamp>Fri 4/11/2025 2:22 PM</Stamp>
                    </CardSide>
                  </CardHead>
                  <Body>
                    <div>HI alex</div>
                    <Broken viewBox="0 0 20 20">
                      <path d="M.5.5h13l6 6v13H.5z" fill="#e8f0fb" stroke="#b8b8b8" />
                      <path d="M13.500.5v6h6" fill="#fff" stroke="#b8b8b8" />
                      <path d="M2 19c1-5 4-8 8-8 3 0 5 2 7 3l-5 5z" fill="#5aa63a" />
                      <path d="M10 20 20 9" stroke="#fff" strokeWidth="2" />
                    </Broken>
                    <div>Delta migration started</div>
                  </Body>
                  <Buttons>
                    <ReplyButton $w={106}>
                      <Icon name="reply" size={28} color="#8e2a9e" />
                      Reply
                    </ReplyButton>
                    <ReplyButton $w={127}>
                      <Icon name="forward" size={28} color="#0f6cbd" />
                      Forward
                    </ReplyButton>
                  </Buttons>
                </div>
              </Card>
            </ReadingCol>
            <Side>
              <Track $bg="transparent">
                <ArrowUp />
                <Thumbbar $h={700} />
              </Track>
            </Side>
          </Reading>
        </Content>
      </Main>
    </Page>
  </>
);

export default App;
